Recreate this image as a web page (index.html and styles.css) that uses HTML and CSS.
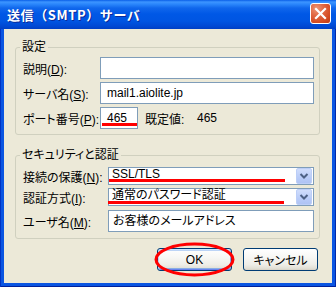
FILE: index.html
```html
<!DOCTYPE html>
<html lang="ja">
<head>
<meta charset="utf-8">
<title>送信（SMTP）サーバ</title>
<link rel="stylesheet" href="styles.css">
</head>
<body>
<div class="window">
  <div class="titlebar">
    <span class="title">送信（SMTP）サーバ</span>
    <span class="close">
      <svg width="21" height="21" viewBox="0 0 21 21"><path d="M6 6 L15 15 M15 6 L6 15" stroke="#fff" stroke-width="2.2" stroke-linecap="square"/></svg>
    </span>
  </div>
  <div class="client">
    <fieldset class="group g1">
      <legend>設定</legend>
      <div class="rows rows1">
        <div class="row"><span class="lbl">説明(<u>D</u>):</span><div class="edit"></div></div>
        <div class="row"><span class="lbl">サーバ名(<u>S</u>):</span><div class="edit">mail1.aiolite.jp</div></div>
        <div class="row"><span class="lbl">ポート番号(<u>P</u>):</span><div class="edit port">465<span class="mark mark-port"></span></div><span class="def">既定値:</span><span class="defval">465</span></div>
      </div>
    </fieldset>
    <fieldset class="group g2">
      <legend>セキュリティと認証</legend>
      <div class="rows rows2">
        <div class="row row-combo"><span class="lbl">接続の保護(<u>N</u>):</span><div class="combo"><span class="val">SSL/TLS</span><span class="arrow"><svg width="14" height="14" viewBox="0 0 14 14"><path d="M3.5 5 L7 8.5 L10.5 5" fill="none" stroke="#4D6185" stroke-width="2"/></svg></span><span class="mark mark-c1"></span></div></div>
        <div class="row row-combo"><span class="lbl">認証方式(<u>I</u>):</span><div class="combo"><span class="val">通常のパスワード認証</span><span class="arrow"><svg width="14" height="14" viewBox="0 0 14 14"><path d="M3.5 5 L7 8.5 L10.5 5" fill="none" stroke="#4D6185" stroke-width="2"/></svg></span><span class="mark mark-c2"></span></div></div>
        <div class="row row-user"><span class="lbl">ユーザ名(<u>M</u>):</span><div class="edit user">お客様のメールアドレス</div></div>
      </div>
    </fieldset>
    <div class="buttons">
      <button class="btn ok">OK<svg class="ring" width="81" height="35" viewBox="0 0 81 35"><ellipse cx="40.5" cy="17.5" rx="38.5" ry="15.5" fill="none" stroke="#FF0000" stroke-width="3"/></svg></button>
      <button class="btn">キャンセル</button>
    </div>
  </div>
</div>
</body>
</html>
```
FILE: styles.css
```css
html, body {
  margin: 0;
  padding: 0;
}
body {
  width: 336px;
  height: 287px;
  overflow: hidden;
  font-family: "Liberation Sans", "Noto Sans CJK JP", sans-serif;
  font-size: 12px;
  font-feature-settings: "palt";
  color: #000;
}
.window {
  width: 336px;
  height: 287px;
  box-sizing: border-box;
  display: flex;
  flex-direction: column;
  background: #0A55E2;
  box-shadow: inset 1px 0 #0033C4, inset -1px 0 #0027A8, inset 0 -1px #00209A;
}
.titlebar {
  height: 29px;
  flex: none;
  display: flex;
  align-items: center;
  justify-content: space-between;
  padding: 0 5px 0 7px;
  background: linear-gradient(to bottom, #0A5FE8 0, #3D95FF 2px, #2C88FC 4px, #1067EC 8px, #0058E6 14px, #0055E2 21px, #0049D4 26px, #003FC4 29px);
}
.title {
  color: #fff;
  font-family: "Noto Sans CJK JP", sans-serif;
  font-feature-settings: normal;
  font-weight: bold;
  font-size: 13px;
  letter-spacing: 0.6px;
  text-shadow: 1px 1px 0 #0A2A9A;
  margin-top: -1px;
}
.close {
  width: 21px;
  height: 21px;
  box-sizing: border-box;
  border: 1px solid #fff;
  border-radius: 3px;
  background: radial-gradient(circle at 30% 25%, #EE9677 0, #E16A45 35%, #D44B22 70%, #BE3A14 100%);
  display: flex;
  margin-top: -3px;
}
.close svg {
  margin: -1px;
}
.client {
  flex: 1;
  margin: 0 4px 4px;
  background: #ECE9D8;
  padding-top: 11px;
  display: flex;
  flex-direction: column;
}
.group {
  margin: 0 12px 0 11px;
  border: 1px solid #D0D0BF;
  border-radius: 3px;
  min-width: 0;
}
.group legend {
  padding: 0 2px;
  margin-left: -3px;
  line-height: 14px;
  font-size: 12px;
}
.g1 {
  padding: 3px 5px 5px 7px;
}
.g2 {
  margin-top: 13px;
  padding: 5px 5px 6px 7px;
}
.rows {
  display: flex;
  flex-direction: column;
}
.rows1 {
  gap: 3px;
}
.rows2 {
  gap: 3px;
}
.row {
  display: flex;
  align-items: center;
  height: 22px;
}
.row-combo {
  height: 18px;
}
.row-user {
  margin-top: 1px;
}
.lbl {
  flex: none;
  white-space: nowrap;
}
.g1 .lbl {
  width: 77px;
}
.g2 .lbl {
  width: 85px;
}
.lbl u {
  text-decoration-thickness: 1px;
  text-underline-offset: 1px;
}
.edit {
  position: relative;
  flex: 1;
  height: 22px;
  box-sizing: border-box;
  border: 1px solid #7F9DB9;
  background: #fff;
  padding-left: 6px;
  line-height: 20px;
  font-size: 12px;
  white-space: nowrap;
}
.edit.port {
  flex: none;
  width: 38px;
}
.edit.user {
  padding-left: 4px;
}
.def {
  margin-left: 7px;
  width: 52px;
}
.defval {
  flex: none;
}
.combo {
  position: relative;
  flex: 1;
  height: 18px;
  box-sizing: border-box;
  border: 1px solid #7F9DB9;
  background: #fff;
  display: flex;
  align-items: stretch;
}
.combo .val {
  flex: 1;
  padding: 0 0 0 3px;
  line-height: 12px;
  white-space: nowrap;
}
.arrow {
  width: 16px;
  margin-right: 1px;
  box-sizing: border-box;
  border: 1px solid #BCCEF7;
  border-radius: 2px;
  background: linear-gradient(to bottom, #D0DDFC, #B9CCF8 60%, #AFC3F4);
  display: flex;
  align-items: center;
  justify-content: center;
}
.mark {
  position: absolute;
  height: 3px;
  background: #FF0000;
}
.mark-port {
  left: 1px;
  right: 0;
  top: 15px;
}
.mark-c1 {
  left: 0;
  width: 176px;
  top: 11px;
}
.mark-c2 {
  left: -1px;
  width: 176px;
  top: 12px;
}
.buttons {
  display: flex;
  justify-content: flex-end;
  gap: 11px;
  margin: 9px 14px 0 0;
}
.btn {
  position: relative;
  width: 75px;
  height: 23px;
  box-sizing: border-box;
  border: 1px solid #003C74;
  border-radius: 3px;
  background: linear-gradient(to bottom, #FFFFFF 0, #F7F7F4 40%, #EEEDE7 75%, #E2E0D6 92%, #D6D0C5 100%);
  font-family: "Liberation Sans", "Noto Sans CJK JP", sans-serif;
  font-feature-settings: "palt";
  font-size: 12px;
  color: #000;
  padding: 0;
}
.btn.ok {
  box-shadow: inset 0 1px #CEE7FF, inset 1px 0 #BCD4F6, inset -1px 0 #89ADE4, inset 0 -1px #6982EE, inset 0 2px #BCD4F6, inset 0 -2px #89ADE4;
}
.ring {
  position: absolute;
  left: -4px;
  top: -7px;
  pointer-events: none;
}
```
